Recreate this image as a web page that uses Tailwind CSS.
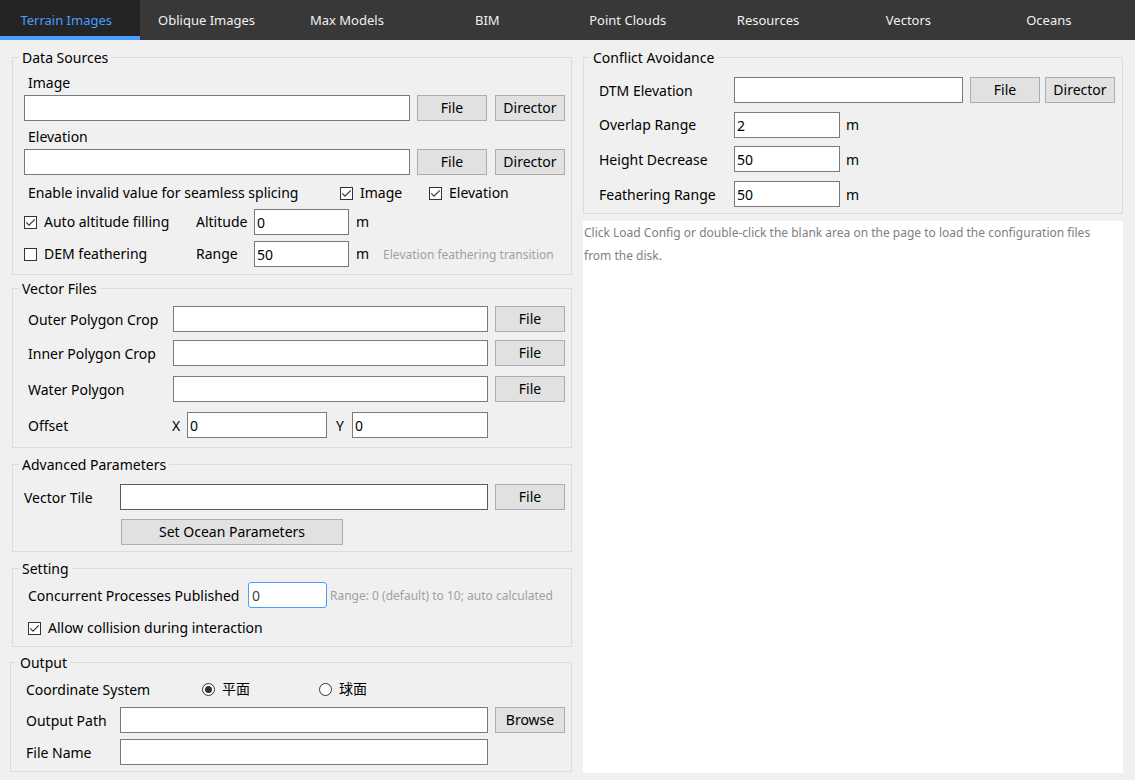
<!DOCTYPE html>
<html lang="en">
<head>
    <meta charset="UTF-8">
    <meta name="viewport" content="width=device-width, initial-scale=1.0">
    <title>Terrain Images</title>
    <script src="https://cdn.jsdelivr.net/npm/@tailwindcss/browser@4"></script>
</head>
<body class="flex flex-col min-h-screen bg-[#f0f0f0] text-black text-[14px] leading-5 font-['Noto_Sans','Noto_Sans_CJK_SC',sans-serif]">

    <!-- Tabs -->
    <nav class="flex h-10 pr-3 bg-[#383838] text-[13px] text-[#f0f0f0]">
        <a href="#" class="flex-1 flex items-center justify-center pr-2 pt-1 bg-[#242424] text-[#4a9dff] border-b-4 border-[#4a9dff]" aria-current="page">Terrain Images</a>
        <a href="#" class="flex-1 flex items-center justify-center pr-2">Oblique Images</a>
        <a href="#" class="flex-1 flex items-center justify-center pr-2">Max Models</a>
        <a href="#" class="flex-1 flex items-center justify-center pr-2">BIM</a>
        <a href="#" class="flex-1 flex items-center justify-center pr-2">Point Clouds</a>
        <a href="#" class="flex-1 flex items-center justify-center pr-2">Resources</a>
        <a href="#" class="flex-1 flex items-center justify-center pr-2">Vectors</a>
        <a href="#" class="flex-1 flex items-center justify-center pr-2">Oceans</a>
    </nav>

    <main class="flex-1 grid grid-cols-[560fr_540fr] gap-[11px] px-3 pt-[9px] pb-[7px]">

        <!-- Left column -->
        <form class="flex flex-col min-w-0">

            <fieldset class="border border-[#dcdcdc] px-[6px] pt-[5px] pb-[7px] min-w-0">
                <legend class="px-[3px] leading-[17px]">Data Sources</legend>
                <label for="image" class="block h-6 pl-[9px] leading-6">Image</label>
                <div class="flex items-center pl-[5px]">
                    <input type="text" id="image" class="flex-1 min-w-0 h-[26px] px-[2px] bg-white border border-[#7a7a7a]">
                    <button type="button" class="w-[70px] h-[26px] ml-[7px] bg-[#e1e1e1] border border-[#adadad]">File</button>
                    <button type="button" class="w-[70px] h-[26px] ml-2 bg-[#e1e1e1] border border-[#adadad]">Director</button>
                </div>
                <label for="elevation" class="block h-6 mt-1 pl-[9px] leading-6">Elevation</label>
                <div class="flex items-center pl-[5px]">
                    <input type="text" id="elevation" class="flex-1 min-w-0 h-[26px] px-[2px] bg-white border border-[#7a7a7a]">
                    <button type="button" class="w-[70px] h-[26px] ml-[7px] bg-[#e1e1e1] border border-[#adadad]">File</button>
                    <button type="button" class="w-[70px] h-[26px] ml-2 bg-[#e1e1e1] border border-[#adadad]">Director</button>
                </div>
                <div class="flex items-center h-[34px] pl-[9px] pt-[2px]">
                    <span class="w-[312px]">Enable invalid value for seamless splicing</span>
                    <label class="flex items-center w-[89px]">
                        <span class="grid mr-[7px]">
                            <input type="checkbox" checked class="peer col-start-1 row-start-1 appearance-none size-[13px] bg-white border border-[#333]">
                            <svg class="hidden peer-checked:block col-start-1 row-start-1 size-[13px] pointer-events-none" viewBox="0 0 13 13" fill="none" stroke="#333" stroke-width="1.2"><path d="M2.3 6.4 5 9.1 10.8 3.3"/></svg>
                        </span>
                        Image
                    </label>
                    <label class="flex items-center">
                        <span class="grid mr-[7px]">
                            <input type="checkbox" checked class="peer col-start-1 row-start-1 appearance-none size-[13px] bg-white border border-[#333]">
                            <svg class="hidden peer-checked:block col-start-1 row-start-1 size-[13px] pointer-events-none" viewBox="0 0 13 13" fill="none" stroke="#333" stroke-width="1.2"><path d="M2.3 6.4 5 9.1 10.8 3.3"/></svg>
                        </span>
                        Elevation
                    </label>
                </div>
                <div class="flex items-center pl-[5px]">
                    <label class="flex items-center w-[172px]">
                        <span class="grid mr-[7px]">
                            <input type="checkbox" checked class="peer col-start-1 row-start-1 appearance-none size-[13px] bg-white border border-[#333]">
                            <svg class="hidden peer-checked:block col-start-1 row-start-1 size-[13px] pointer-events-none" viewBox="0 0 13 13" fill="none" stroke="#333" stroke-width="1.2"><path d="M2.3 6.4 5 9.1 10.8 3.3"/></svg>
                        </span>
                        Auto altitude filling
                    </label>
                    <label for="altitude" class="w-[58px]">Altitude</label>
                    <input type="text" id="altitude" value="0" class="w-[95px] h-[26px] px-[2px] bg-white border border-[#7a7a7a]">
                    <span class="ml-[7px]">m</span>
                </div>
                <div class="flex items-center mt-[6px] pl-[5px]">
                    <label class="flex items-center w-[172px]">
                        <span class="grid mr-[7px]">
                            <input type="checkbox" class="peer col-start-1 row-start-1 appearance-none size-[13px] bg-white border border-[#333]">
                            <svg class="hidden peer-checked:block col-start-1 row-start-1 size-[13px] pointer-events-none" viewBox="0 0 13 13" fill="none" stroke="#333" stroke-width="1.2"><path d="M2.3 6.4 5 9.1 10.8 3.3"/></svg>
                        </span>
                        DEM feathering
                    </label>
                    <label for="range" class="w-[58px]">Range</label>
                    <input type="text" id="range" value="50" class="w-[95px] h-[26px] px-[2px] bg-white border border-[#7a7a7a]">
                    <span class="ml-[7px]">m</span>
                    <span class="ml-[14px] pt-[2px] text-[12px] text-[#a0a0a0]">Elevation feathering transition</span>
                </div>
            </fieldset>

            <fieldset class="mt-[5px] border border-[#dcdcdc] px-[6px] pt-[9px] pb-[9px] min-w-0">
                <legend class="px-[3px] leading-[17px]">Vector Files</legend>
                <div class="flex items-center pl-[9px]">
                    <label for="outer" class="w-[145px] pt-[2px]">Outer Polygon Crop</label>
                    <input type="text" id="outer" class="flex-1 min-w-0 h-[26px] px-[2px] bg-white border border-[#7a7a7a]">
                    <button type="button" class="w-[70px] h-[26px] ml-[7px] bg-[#e1e1e1] border border-[#adadad]">File</button>
                </div>
                <div class="flex items-center mt-2 pl-[9px]">
                    <label for="inner" class="w-[145px] pt-[2px]">Inner Polygon Crop</label>
                    <input type="text" id="inner" class="flex-1 min-w-0 h-[26px] px-[2px] bg-white border border-[#7a7a7a]">
                    <button type="button" class="w-[70px] h-[26px] ml-[7px] bg-[#e1e1e1] border border-[#adadad]">File</button>
                </div>
                <div class="flex items-center mt-[10px] pl-[9px]">
                    <label for="water" class="w-[145px] pt-[2px]">Water Polygon</label>
                    <input type="text" id="water" class="flex-1 min-w-0 h-[26px] px-[2px] bg-white border border-[#7a7a7a]">
                    <button type="button" class="w-[70px] h-[26px] ml-[7px] bg-[#e1e1e1] border border-[#adadad]">File</button>
                </div>
                <div class="flex items-center mt-[10px] pl-[9px] pr-[77px]">
                    <span class="w-36 pt-[2px]">Offset</span>
                    <label for="offsetX" class="w-[15px] pt-[2px]">X</label>
                    <input type="text" id="offsetX" value="0" class="flex-[140] min-w-0 h-[26px] px-[2px] bg-white border border-[#7a7a7a]">
                    <label for="offsetY" class="w-[25px] pl-[9px] pt-[2px]">Y</label>
                    <input type="text" id="offsetY" value="0" class="flex-[136] min-w-0 h-[26px] px-[2px] bg-white border border-[#7a7a7a]">
                </div>
            </fieldset>

            <fieldset class="mt-2 border border-[#dcdcdc] px-[6px] pt-[11px] pb-[6px] min-w-0">
                <legend class="px-[3px] leading-[17px]">Advanced Parameters</legend>
                <div class="flex items-center pl-[5px]">
                    <label for="vectorTile" class="w-24 pt-[2px]">Vector Tile</label>
                    <input type="text" id="vectorTile" class="flex-1 min-w-0 h-[26px] px-[2px] bg-white border border-[#5a5a5a]">
                    <button type="button" class="w-[70px] h-[26px] ml-[7px] bg-[#e1e1e1] border border-[#adadad]">File</button>
                </div>
                <button type="button" class="block w-[222px] h-[26px] mt-[9px] ml-[102px] bg-[#e1e1e1] border border-[#adadad]">Set Ocean Parameters</button>
            </fieldset>

            <fieldset class="mt-2 border border-[#dcdcdc] px-[6px] pt-[5px] pb-[6px] min-w-0">
                <legend class="px-[3px] leading-[17px]">Setting</legend>
                <div class="flex items-center pl-[9px]">
                    <label for="processes" class="w-[220px] pt-[2px]">Concurrent Processes Published</label>
                    <input type="text" id="processes" value="0" class="w-[79px] h-[26px] px-[3px] bg-white text-[#404040] border border-[#4a9dff] rounded-[3px]">
                    <span class="ml-[3px] pt-[2px] text-[12px] text-[#a0a0a0] whitespace-nowrap">Range: 0 (default) to 10; auto calculated</span>
                </div>
                <label class="flex items-center h-6 mt-2 pl-[9px]">
                    <span class="grid mr-[7px]">
                        <input type="checkbox" checked class="peer col-start-1 row-start-1 appearance-none size-[13px] bg-white border border-[#333]">
                        <svg class="hidden peer-checked:block col-start-1 row-start-1 size-[13px] pointer-events-none" viewBox="0 0 13 13" fill="none" stroke="#333" stroke-width="1.2"><path d="M2.3 6.4 5 9.1 10.8 3.3"/></svg>
                    </span>
                    Allow collision during interaction
                </label>
            </fieldset>

            <fieldset class="mt-[7px] -ml-[2px] border border-[#dcdcdc] px-[6px] pb-[6px] min-w-0">
                <legend class="px-[3px] leading-[17px]">Output</legend>
                <div class="flex items-center h-9 pl-[9px]">
                    <span class="w-44 pt-[2px]">Coordinate System</span>
                    <label class="flex items-center w-[117px]">
                        <input type="radio" name="coord" checked class="appearance-none grid place-items-center size-[13px] mr-[7px] bg-white border border-[#333] rounded-full checked:before:block checked:before:size-[7px] checked:before:rounded-full checked:before:bg-[#333]">
                        平面
                    </label>
                    <label class="flex items-center">
                        <input type="radio" name="coord" class="appearance-none grid place-items-center size-[13px] mr-[7px] bg-white border border-[#333] rounded-full checked:before:block checked:before:size-[7px] checked:before:rounded-full checked:before:bg-[#333]">
                        球面
                    </label>
                </div>
                <div class="flex items-center pl-[9px]">
                    <label for="outputPath" class="w-[94px] pt-[2px]">Output Path</label>
                    <input type="text" id="outputPath" class="flex-1 min-w-0 h-[26px] px-[2px] bg-white border border-[#7a7a7a]">
                    <button type="button" class="w-[70px] h-[26px] ml-[7px] bg-[#e1e1e1] border border-[#adadad]">Browse</button>
                </div>
                <div class="flex items-center mt-[6px] pl-[9px] pr-[77px]">
                    <label for="fileName" class="w-[94px] pt-[2px]">File Name</label>
                    <input type="text" id="fileName" class="flex-1 min-w-0 h-[26px] px-[2px] bg-white border border-[#7a7a7a]">
                </div>
            </fieldset>
        </form>

        <!-- Right column -->
        <div class="flex flex-col min-w-0">
            <fieldset class="border border-[#dcdcdc] px-[6px] pt-[11px] pb-[6px] min-w-0">
                <legend class="px-[3px] leading-[17px]">Conflict Avoidance</legend>
                <div class="flex items-center pl-[9px] pr-px">
                    <label for="dtm" class="w-[135px] pt-[2px]">DTM Elevation</label>
                    <input type="text" id="dtm" class="flex-1 min-w-0 h-[26px] px-[2px] bg-white border border-[#7a7a7a]">
                    <button type="button" class="w-[70px] h-[26px] ml-[7px] bg-[#e1e1e1] border border-[#adadad]">File</button>
                    <button type="button" class="w-[70px] h-[26px] ml-[5px] bg-[#e1e1e1] border border-[#adadad]">Director</button>
                </div>
                <div class="flex items-center mt-[9px] pl-[9px]">
                    <label for="overlap" class="w-[135px]">Overlap Range</label>
                    <input type="text" id="overlap" value="2" class="w-[106px] h-[26px] px-[2px] bg-white border border-[#7a7a7a]">
                    <span class="ml-[6px]">m</span>
                </div>
                <div class="flex items-center mt-2 pl-[9px]">
                    <label for="height" class="w-[135px] pt-[2px]">Height Decrease</label>
                    <input type="text" id="height" value="50" class="w-[106px] h-[26px] px-[2px] bg-white border border-[#7a7a7a]">
                    <span class="ml-[6px] pt-[2px]">m</span>
                </div>
                <div class="flex items-center mt-[9px] pl-[9px]">
                    <label for="feathering" class="w-[135px] pt-[2px]">Feathering Range</label>
                    <input type="text" id="feathering" value="50" class="w-[106px] h-[26px] px-[2px] bg-white border border-[#7a7a7a]">
                    <span class="ml-[6px] pt-[2px]">m</span>
                </div>
            </fieldset>
            <textarea aria-label="Configuration" class="flex-1 mt-[7px] pl-px pr-2 bg-white text-[12px] leading-[23px] placeholder:text-[#808080] resize-none" placeholder="Click Load Config or double-click the blank area on the page to load the configuration files from the disk."></textarea>
        </div>
    </main>
</body>
</html>
